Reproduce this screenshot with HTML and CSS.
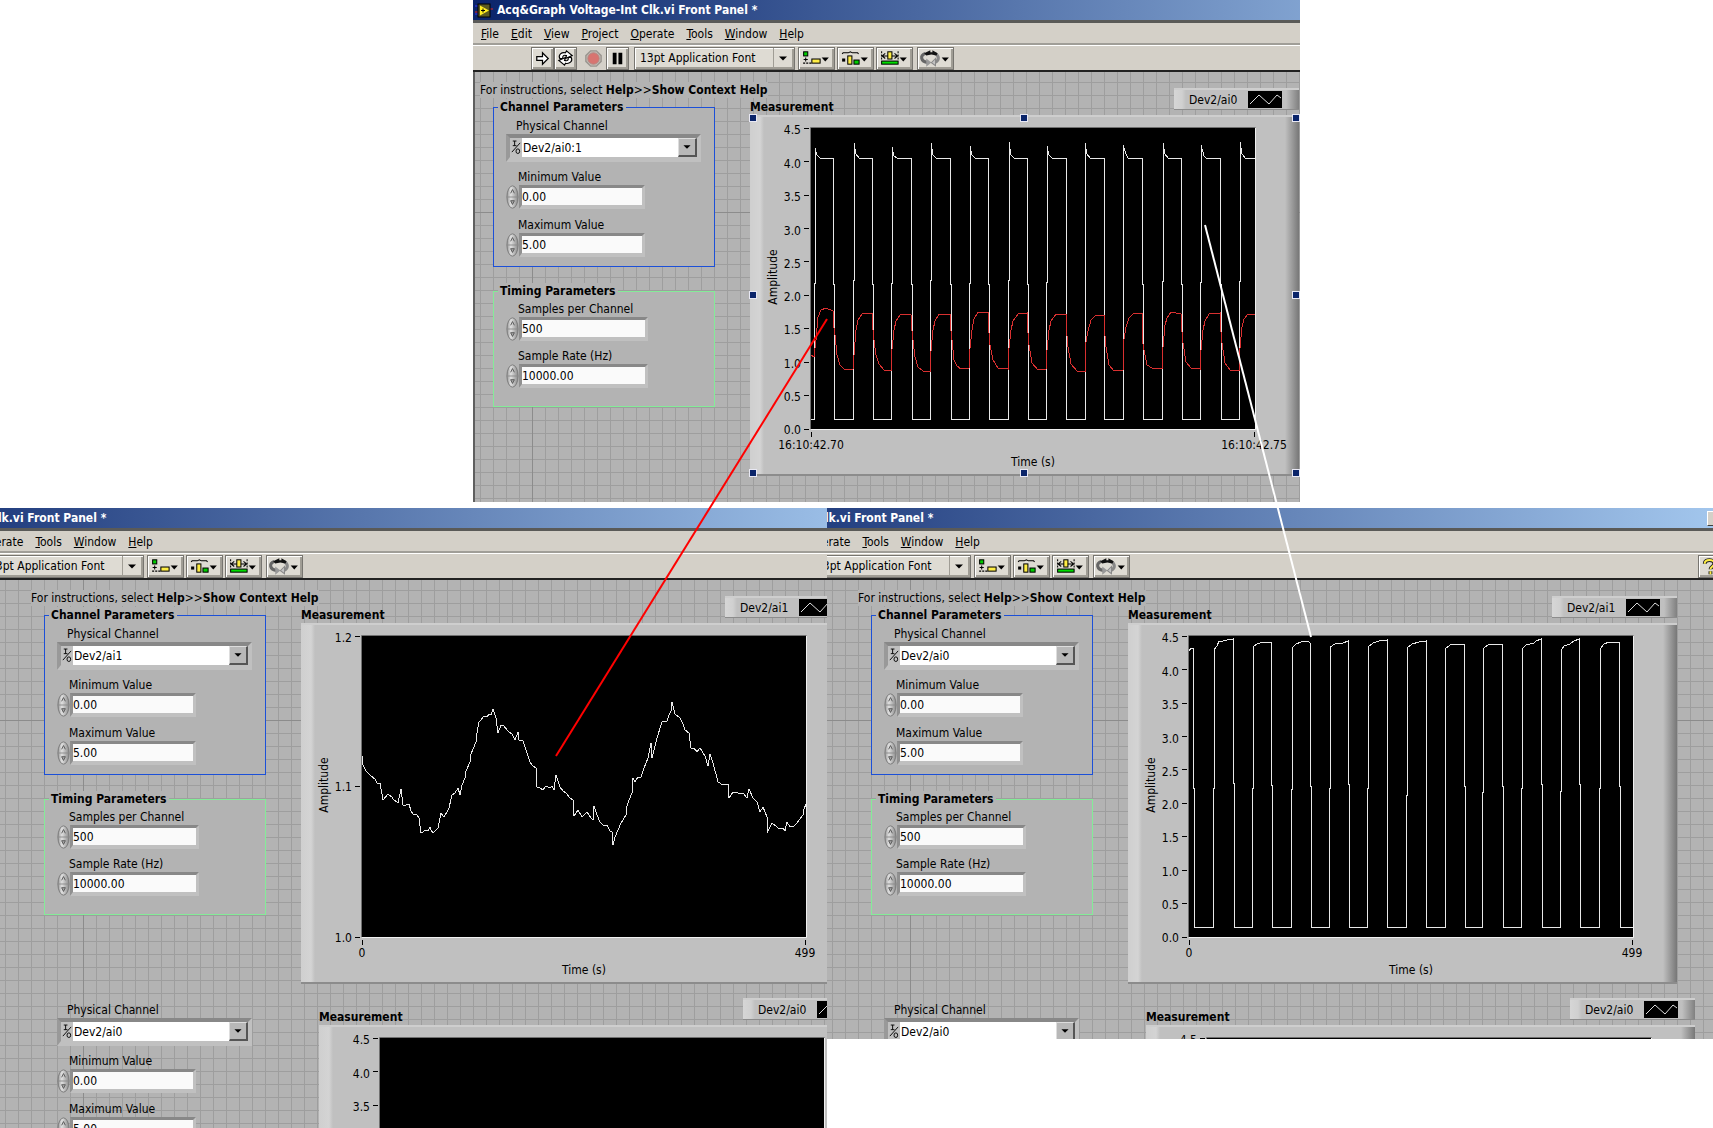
FILE: index.html
```html
<!DOCTYPE html>
<html lang="en">
<head>
<meta charset="utf-8">
<title>Acq&amp;Graph Voltage-Int Clk.vi</title>
<link rel="stylesheet" href="styles.css">
</head>
<body>
<svg class="defs" width="0" height="0" aria-hidden="true">
  <defs>
    <linearGradient id="spin" x1="0" x2="1" y1="0" y2="0">
      <stop offset="0" stop-color="#9a9a9a"/><stop offset=".35" stop-color="#e0e0e0"/><stop offset="1" stop-color="#8a8a8a"/>
    </linearGradient>
    <symbol id="i-app" viewBox="0 0 18 16">
      <path d="M0 4h4M0 12h4" stroke="#33f" stroke-width="1"/><path d="M0 10h4M14 7h4" stroke="#d22" stroke-width="1"/>
      <rect x="3" y="2" width="12" height="13" fill="#5a5a20" stroke="#000"/>
      <path d="M5 3.500v10l9-5z" fill="#ffee22"/><path d="M6 8.500h4M8 6.500v4" stroke="#000" stroke-width="1"/>
    </symbol>
    <symbol id="i-run" viewBox="0 0 22 22"><path d="M5 9h6V5l6 6-6 6v-4H5z" fill="#fff" stroke="#000" stroke-width="1.300"/></symbol>
    <symbol id="i-loop" viewBox="0 0 22 22">
      <path d="M5 11c-2-4 2-7 6-6l1-2 6 5-7 3 1-3c-3-1-4 0-4 3z" fill="#fff" stroke="#000" stroke-width="1.200"/>
      <path d="M17 10c2 4-2 7-6 6l-1 2-6-5 7-3-1 3c3 1 4 0 4-3z" fill="#fff" stroke="#000" stroke-width="1.200"/>
    </symbol>
    <symbol id="i-stop" viewBox="0 0 22 22"><path d="M8 3h6l5 5v6l-5 5H8l-5-5V8z" fill="#c4bcb4" stroke="#9a9690" stroke-width="1.500"/><circle cx="11" cy="11" r="6" fill="#d87470" stroke="#b08884"/></symbol>
    <symbol id="i-pause" viewBox="0 0 22 22"><path d="M6 5h4v12H6zM12 5h4v12h-4z" fill="#000"/></symbol>
    <symbol id="i-align" viewBox="0 0 34 20">
      <rect x="4.500" y="3.500" width="4" height="4" fill="#0c0" stroke="#000"/>
      <path d="M6.500 9v4M4.500 11h4" stroke="#000"/><path d="M4 14.500h8" stroke="#000" stroke-dasharray="2 1"/>
      <rect x="12.500" y="10.500" width="8" height="4" fill="#ffee44" stroke="#000"/><path d="M22 9h7l-3.500 4z"/>
    </symbol>
    <symbol id="i-dist" viewBox="0 0 34 20">
      <path d="M4 5.500l1-1h5l2-1 2 1h5l1 1" fill="none" stroke="#000"/><rect x="4" y="10" width="3" height="3"/>
      <rect x="9.500" y="7.500" width="4" height="8" fill="#ffee44" stroke="#000"/><rect x="15.500" y="11.500" width="5" height="4" fill="#0c0" stroke="#000"/><path d="M22 9h7l-3.500 4z"/>
    </symbol>
    <symbol id="i-size" viewBox="0 0 34 20">
      <path d="M4.500 3v8M20.500 3v8" stroke="#000" stroke-dasharray="2 1"/><path d="M5 7.500h15M8 5l-3 2.500L8 10M17 5l3 2.500L17 10" stroke="#000" fill="none"/>
      <rect x="10.500" y="3.500" width="4" height="7" fill="#ffee44" stroke="#000"/><rect x="4.500" y="12.500" width="16" height="3" fill="#0d0" stroke="#000"/><path d="M22 9h7l-3.500 4z"/>
    </symbol>
    <symbol id="i-order" viewBox="0 0 34 20">
      <path d="M7 5c-5 2-5 8 3 9" fill="none" stroke="#666" stroke-width="3"/><path d="M16 5c5 2 5 7 0 9" fill="none" stroke="#888" stroke-width="3"/>
      <path d="M6 5l6-3v2h2V2l5 3-1 2-5-1-5 1z" fill="#111"/>
      <path d="M8 10l5 4-5 4z" fill="#999"/><path d="M17 10l-4 4 4 3z" fill="#c4c4c4" stroke="#888"/>
      <path d="M23 9h7l-3.500 4z"/>
    </symbol>
    <symbol id="i-help" viewBox="0 0 22 22"><path d="M6 8c0-5 10-5 10 0 0 3-4 3-4 6M12 16v3" fill="none" stroke="#222" stroke-width="4"/><path d="M6 8c0-5 10-5 10 0 0 3-4 3-4 6M12 16v3" fill="none" stroke="#ffee44" stroke-width="2"/></symbol>
    <symbol id="i-down" viewBox="0 0 18 18"><path d="M5 7h8l-4 4z"/></symbol>
    <symbol id="i-io" viewBox="0 0 13 18"><path d="M3 2h4M5 2v5M3 7h4M2 14L11 4" fill="none" stroke="#000" stroke-width="1"/><ellipse cx="8.500" cy="13" rx="2" ry="2.500" fill="none" stroke="#000"/></symbol>
    <symbol id="i-spin" viewBox="0 0 14 26">
      <ellipse cx="7" cy="13" rx="6" ry="12" fill="url(#spin)" stroke="#777"/><path d="M1 13h12" stroke="#8a8a8a"/>
      <path d="M5 9l2-4 2 4" fill="none" stroke="#555"/><path d="M5 17h4l-2 4z" fill="#aaa" stroke="#555"/>
    </symbol>
    <symbol id="i-wave" viewBox="0 0 34 17"><rect width="34" height="17"/><path d="M2 13l9-9 10 9 8-9 4 3" fill="none" stroke="#ddd"/></symbol>
    <symbol id="axis-volts" viewBox="0 0 549 361">
      <rect x="61" y="13" width="444" height="301"/><path d="M61 314.500h444.500V13" fill="none" stroke="#f0f0f0"/><path d="M60.500 314V12.500h445" fill="none" stroke="#707070"/>
      <path d="M54 13.500h5M54 46.500h5M54 80.500h5M54 113.500h5M54 146.500h5M54 180.500h5M54 213.500h5M54 247.500h5M54 280.500h5M54 314.500h5M61.500 317v5M504.500 317v5" stroke="#000"/>
      <g text-anchor="end"><text x="51" y="19">4.5</text><text x="51" y="53">4.0</text><text x="51" y="86">3.5</text><text x="51" y="120">3.0</text><text x="51" y="153">2.5</text><text x="51" y="186">2.0</text><text x="51" y="219">1.5</text><text x="51" y="253">1.0</text><text x="51" y="286">0.5</text><text x="51" y="319">0.0</text></g>
      <text x="283" y="351" text-anchor="middle">Time (s)</text><text transform="translate(27 162) rotate(-90)" text-anchor="middle">Amplitude</text>
    </symbol>
  </defs>
</svg>

<main class="desktop">
  <section class="window window-both">
    <div class="frame">
      <header class="titlebar"><svg width="18" height="16"><use href="#i-app"/></svg><h1>Acq&amp;Graph Voltage-Int Clk.vi Front Panel *</h1><button class="min" aria-label="Minimize"></button></header>
      <nav class="menubar"><button><u>F</u>ile</button><button><u>E</u>dit</button><button><u>V</u>iew</button><button><u>P</u>roject</button><button><u>O</u>perate</button><button><u>T</u>ools</button><button><u>W</u>indow</button><button><u>H</u>elp</button></nav>
      <div class="toolbar">
        <button class="tool" aria-label="Run"><svg><use href="#i-run"/></svg></button><button class="tool" aria-label="Run continuously"><svg><use href="#i-loop"/></svg></button>
        <button class="tool flat" aria-label="Abort"><svg><use href="#i-stop"/></svg></button><button class="tool" aria-label="Pause"><svg><use href="#i-pause"/></svg></button>
        <div class="fontbox"><select aria-label="Text settings"><option>13pt Application Font</option></select><svg><use href="#i-down"/></svg></div>
        <button class="tool wide" aria-label="Align objects"><svg><use href="#i-align"/></svg></button><button class="tool wide" aria-label="Distribute objects"><svg><use href="#i-dist"/></svg></button><button class="tool wide" aria-label="Resize objects"><svg><use href="#i-size"/></svg></button><button class="tool wide order" aria-label="Reorder"><svg><use href="#i-order"/></svg></button>
        <button class="tool help" aria-label="Context help"><svg><use href="#i-help"/></svg></button>
      </div>
      <div class="canvas">
        <div class="controls">
          <p class="hint">For instructions, select <b>Help</b>&gt;&gt;<b>Show Context Help</b></p>
          <fieldset class="group channel"><legend>Channel Parameters</legend>
            <label class="phys" for="a-ch">Physical Channel</label>
            <div class="combo"><svg class="io"><use href="#i-io"/></svg><select id="a-ch"><option>Dev2/ai0:1</option></select><svg class="drop"><use href="#i-down"/></svg></div>
            <label for="a-min">Minimum Value</label><div class="number"><svg><use href="#i-spin"/></svg><input id="a-min" value="0.00"></div>
            <label for="a-max">Maximum Value</label><div class="number"><svg><use href="#i-spin"/></svg><input id="a-max" value="5.00"></div>
          </fieldset>
          <fieldset class="group timing"><legend>Timing Parameters</legend>
            <label for="a-n">Samples per Channel</label><div class="number long"><svg><use href="#i-spin"/></svg><input id="a-n" value="500"></div>
            <label for="a-hz">Sample Rate (Hz)</label><div class="number long"><svg><use href="#i-spin"/></svg><input id="a-hz" value="10000.00"></div>
          </fieldset>
        </div>
        <div class="graphs">
          <figure>
            <figcaption><b>Measurement</b><span class="plate">Dev2/ai0<svg><use href="#i-wave"/></svg></span></figcaption>
            <div class="graph selected">
              <svg class="plot" viewBox="0 0 549 361"><use href="#axis-volts"/>
                <g text-anchor="middle"><text x="61" y="334">16:10:42.70</text><text x="504" y="334">16:10:42.75</text></g>
                <path class="trace" d="M61 304H64V168h1V33l2 7 3 3H83V169h1V304H103V165h1V28l2 11 3 4H122V169h1V304H141V168h1V32l2 9 3 2H161V169h1V304H180V165h1V28l2 12 3 3H200V169h1V304H219V168h1V31l2 9 3 3H238V169h1V304H258V165h1V27l2 13 3 3H277V169h1V304H296V167h1V31l2 9 3 3H316V304H335V28l2 11 3 4H354V304H373V30l3 9 2 4H392V169h1V304H412V166h1V28l2 11 3 4H431V169h1V304H450V167h1V30l3 11 2 2H470V169h1V304H489V166h1V27l2 12 3 4H505"/>
                <path class="trace red" d="M61 240L64 242 66 225 68 202 71 195 76 193 83 196V205L85 220 87 240 90 250 94 254H103L104 240 106 215 108 205 112 199 116 198H122V205L124 225 126 240 129 249 134 255H141V244L144 215 146 206 150 200 154 199 161 200V207L163 225 165 242 168 252 173 256H180V246L183 215 185 206 189 199H200V206L202 225 204 245 207 251 211 254 219 253V243L222 215 224 204 228 197H238V206L240 230 243 245 248 253 258 254V243L261 215 263 206 268 199 277 198V206L279 230 282 248 288 255 296 254V245L299 215 301 206 306 199H316V210L318 232 321 249 327 256H335V232L338 216 341 205 346 200H354V210L356 232 359 250 364 256 373 255V230L376 212 379 203 384 198H392V222L394 235 397 250 402 253H412V243L415 210 417 203 421 197 431 199V206L433 228 436 247 441 253 450 254V245L453 215 455 206 459 199 470 198V206L472 228 475 248 480 255H489V243L492 212 494 204 498 199H505"/>
              </svg>
              <i class="grip tl"></i><i class="grip tc"></i><i class="grip tr"></i><i class="grip ml"></i><i class="grip mr"></i><i class="grip bl"></i><i class="grip bc"></i><i class="grip br"></i>
            </div>
          </figure>
        </div>
      </div>
    </div>
  </section>

  <div class="pair">
    <section class="window window-ai1 scrolled">
      <div class="frame">
        <header class="titlebar"><svg width="18" height="16"><use href="#i-app"/></svg><h1>Acq&amp;Graph Voltage-Int Clk.vi Front Panel *</h1><button class="min" aria-label="Minimize"></button></header>
        <nav class="menubar"><button><u>F</u>ile</button><button><u>E</u>dit</button><button><u>V</u>iew</button><button><u>P</u>roject</button><button><u>O</u>perate</button><button><u>T</u>ools</button><button><u>W</u>indow</button><button><u>H</u>elp</button></nav>
        <div class="toolbar">
          <button class="tool" aria-label="Run"><svg><use href="#i-run"/></svg></button><button class="tool" aria-label="Run continuously"><svg><use href="#i-loop"/></svg></button>
          <button class="tool flat" aria-label="Abort"><svg><use href="#i-stop"/></svg></button><button class="tool" aria-label="Pause"><svg><use href="#i-pause"/></svg></button>
          <div class="fontbox"><select aria-label="Text settings"><option>13pt Application Font</option></select><svg><use href="#i-down"/></svg></div>
          <button class="tool wide" aria-label="Align objects"><svg><use href="#i-align"/></svg></button><button class="tool wide" aria-label="Distribute objects"><svg><use href="#i-dist"/></svg></button><button class="tool wide" aria-label="Resize objects"><svg><use href="#i-size"/></svg></button><button class="tool wide order" aria-label="Reorder"><svg><use href="#i-order"/></svg></button>
          <button class="tool help" aria-label="Context help"><svg><use href="#i-help"/></svg></button>
        </div>
        <div class="canvas">
          <div class="controls">
            <p class="hint">For instructions, select <b>Help</b>&gt;&gt;<b>Show Context Help</b></p>
            <fieldset class="group channel"><legend>Channel Parameters</legend>
              <label class="phys" for="b-ch">Physical Channel</label>
              <div class="combo"><svg class="io"><use href="#i-io"/></svg><select id="b-ch"><option>Dev2/ai1</option></select><svg class="drop"><use href="#i-down"/></svg></div>
              <label for="b-min">Minimum Value</label><div class="number"><svg><use href="#i-spin"/></svg><input id="b-min" value="0.00"></div>
              <label for="b-max">Maximum Value</label><div class="number"><svg><use href="#i-spin"/></svg><input id="b-max" value="5.00"></div>
            </fieldset>
            <fieldset class="group timing"><legend>Timing Parameters</legend>
              <label for="b-n">Samples per Channel</label><div class="number long"><svg><use href="#i-spin"/></svg><input id="b-n" value="500"></div>
              <label for="b-hz">Sample Rate (Hz)</label><div class="number long"><svg><use href="#i-spin"/></svg><input id="b-hz" value="10000.00"></div>
            </fieldset>
            <div class="group loose">
              <label class="phys" for="b-ch2">Physical Channel</label>
              <div class="combo"><svg class="io"><use href="#i-io"/></svg><select id="b-ch2"><option>Dev2/ai0</option></select><svg class="drop"><use href="#i-down"/></svg></div>
              <label for="b-min2">Minimum Value</label><div class="number"><svg><use href="#i-spin"/></svg><input id="b-min2" value="0.00"></div>
              <label for="b-max2">Maximum Value</label><div class="number"><svg><use href="#i-spin"/></svg><input id="b-max2" value="5.00"></div>
            </div>
          </div>
          <div class="graphs">
            <figure>
              <figcaption><b>Measurement</b><span class="plate">Dev2/ai1<svg><use href="#i-wave"/></svg></span></figcaption>
              <div class="graph">
                <svg class="plot" viewBox="0 0 549 361">
                  <rect x="61" y="13" width="444" height="301"/><path d="M61 314.500h444.500V13" fill="none" stroke="#f0f0f0"/><path d="M60.500 314V12.500h445" fill="none" stroke="#707070"/>
                  <path d="M54 13.500h5M54 163.500h5M54 314.500h5M61.500 317v5M504.500 317v5" stroke="#000"/>
                  <g text-anchor="end"><text x="51" y="19">1.2</text><text x="51" y="168">1.1</text><text x="51" y="319">1.0</text></g>
                  <g text-anchor="middle"><text x="61" y="334">0</text><text x="504" y="334">499</text><text x="283" y="351">Time (s)</text><text transform="translate(27 162) rotate(-90)">Amplitude</text></g>
                  <path class="trace" d="M61 133L62 142 65 148 70 153 74 156 76 160 79 160 82 177 87 171 91 174 92 176 97 180 100 166 102 182 105 182 108 181 110 188 112 191 116 192 118 195 120 210 122 209 124 207 127 208 129 204 130 207 132 210 135 207 137 205 140 190 143 194 146 189 148 185 151 172 154 170 157 165 159 172 161 162 164 155 165 148 169 139 170 131 175 119 176 110 178 99 180 97 183 93 186 94 188 91 190 92 192 86 195 95 197 110 200 102 203 103 206 107 208 109 211 111 214 117 217 109 218 117 222 118 225 127 229 139 232 143 235 145 236 164 239 165 242 167 245 163 249 165 251 163 253 167 255 152 259 164 262 168 265 170 269 175 272 177 273 193 277 187 281 194 283 192 286 189 290 195 292 197 293 183 296 192 299 199 303 203 306 202 309 208 311 209 312 222 314 214 317 207 320 200 325 192 326 183 328 177 331 170 332 155 334 159 337 154 340 154 343 145 347 135 350 120 351 135 354 123 356 115 361 99 363 98 366 98 368 92 370 88 371 79 374 91 379 95 382 101 384 107 388 110 390 125 393 125 396 129 399 125 404 133 407 143 409 131 412 140 417 159 422 162 427 161 428 175 432 169 437 170 442 170 446 175 448 166 452 175 456 179 459 189 462 184 466 194 466 210 471 200 476 204 478 206 482 205 484 208 486 199 489 204 493 203 496 200 502 192 503 186 505 181"/>
                </svg>
              </div>
            </figure>
            <figure class="second">
              <figcaption><b>Measurement</b><span class="plate">Dev2/ai0<svg><use href="#i-wave"/></svg></span></figcaption>
              <div class="graph"><svg class="plot" viewBox="0 0 549 361"><use href="#axis-volts"/></svg></div>
            </figure>
          </div>
        </div>
      </div>
    </section>

    <section class="window window-ai0 scrolled">
      <div class="frame">
        <header class="titlebar"><svg width="18" height="16"><use href="#i-app"/></svg><h1>Acq&amp;Graph Voltage-Int Clk.vi Front Panel *</h1><button class="min" aria-label="Minimize"></button></header>
        <nav class="menubar"><button><u>F</u>ile</button><button><u>E</u>dit</button><button><u>V</u>iew</button><button><u>P</u>roject</button><button><u>O</u>perate</button><button><u>T</u>ools</button><button><u>W</u>indow</button><button><u>H</u>elp</button></nav>
        <div class="toolbar">
          <button class="tool" aria-label="Run"><svg><use href="#i-run"/></svg></button><button class="tool" aria-label="Run continuously"><svg><use href="#i-loop"/></svg></button>
          <button class="tool flat" aria-label="Abort"><svg><use href="#i-stop"/></svg></button><button class="tool" aria-label="Pause"><svg><use href="#i-pause"/></svg></button>
          <div class="fontbox"><select aria-label="Text settings"><option>13pt Application Font</option></select><svg><use href="#i-down"/></svg></div>
          <button class="tool wide" aria-label="Align objects"><svg><use href="#i-align"/></svg></button><button class="tool wide" aria-label="Distribute objects"><svg><use href="#i-dist"/></svg></button><button class="tool wide" aria-label="Resize objects"><svg><use href="#i-size"/></svg></button><button class="tool wide order" aria-label="Reorder"><svg><use href="#i-order"/></svg></button>
          <button class="tool help" aria-label="Context help"><svg><use href="#i-help"/></svg></button>
        </div>
        <div class="canvas">
          <div class="controls">
            <p class="hint">For instructions, select <b>Help</b>&gt;&gt;<b>Show Context Help</b></p>
            <fieldset class="group channel"><legend>Channel Parameters</legend>
              <label class="phys" for="c-ch">Physical Channel</label>
              <div class="combo"><svg class="io"><use href="#i-io"/></svg><select id="c-ch"><option>Dev2/ai0</option></select><svg class="drop"><use href="#i-down"/></svg></div>
              <label for="c-min">Minimum Value</label><div class="number"><svg><use href="#i-spin"/></svg><input id="c-min" value="0.00"></div>
              <label for="c-max">Maximum Value</label><div class="number"><svg><use href="#i-spin"/></svg><input id="c-max" value="5.00"></div>
            </fieldset>
            <fieldset class="group timing"><legend>Timing Parameters</legend>
              <label for="c-n">Samples per Channel</label><div class="number long"><svg><use href="#i-spin"/></svg><input id="c-n" value="500"></div>
              <label for="c-hz">Sample Rate (Hz)</label><div class="number long"><svg><use href="#i-spin"/></svg><input id="c-hz" value="10000.00"></div>
            </fieldset>
            <div class="group loose">
              <label class="phys" for="c-ch2">Physical Channel</label>
              <div class="combo"><svg class="io"><use href="#i-io"/></svg><select id="c-ch2"><option>Dev2/ai0</option></select><svg class="drop"><use href="#i-down"/></svg></div>
            </div>
          </div>
          <div class="graphs">
            <figure>
              <figcaption><b>Measurement</b><span class="plate">Dev2/ai1<svg><use href="#i-wave"/></svg></span></figcaption>
              <div class="graph">
                <svg class="plot" viewBox="0 0 549 361"><use href="#axis-volts"/>
                  <g text-anchor="middle"><text x="61" y="334">0</text><text x="504" y="334">499</text></g>
                  <path class="trace" d="M61 28l2-3h2V165h1V304H85V165h1V27l3-4 2-5h4l4-1 6-1V160h1V304H124V165h1V24l4-3 6-2h8V162h1V304H163V166h1V25l4-4 5-2 7-1 2 2V163h1V304H201V165h1V24l5-3 8-1 5-2V161h1V304H239V165h1V24l5-4 6-2 8-1V304H278V172h1V25l5-4 7-2 7-1V304H317V26l5-4 5-1h9V163h1V304H354V169h1V29l1-4 5-4h13V163h1V304H393V165h1V26l4-4 8-2 2-2 5-2V161h1V304H432V168h1V28l3-5 6-2 4-3 5-2V161h1V304H471V165h1V26l4-5 5-2h10V163h1V304H505"/>
                </svg>
              </div>
            </figure>
            <figure class="second">
              <figcaption><b>Measurement</b><span class="plate">Dev2/ai0<svg><use href="#i-wave"/></svg></span></figcaption>
              <div class="graph"><svg class="plot" viewBox="0 0 549 361"><use href="#axis-volts"/></svg></div>
            </figure>
          </div>
        </div>
      </div>
    </section>
  </div>
  <svg class="callouts" aria-hidden="true"><path d="M827 319L556 756" stroke="#f00"/><path d="M1205 225L1311 637" stroke="#fff"/></svg>
</main>
</body>
</html>
```
FILE: styles.css
```css
* { box-sizing: border-box; }
body {
  margin: 0;
  background: #fff;
  color: #000;
  font: 12px/16px "DejaVu Sans Condensed", "DejaVu Sans", sans-serif;
  font-stretch: condensed;
}
svg { display: block; flex: none; }
button, input, select { font: inherit; color: inherit; margin: 0; padding: 0; border: 0; border-radius: 0; }
select { appearance: none; background: none; }
p, figure, h1 { margin: 0; }
.defs { position: absolute; }

.desktop {
  position: relative;
  display: flex;
  flex-direction: column;
  gap: 6px;
  overflow: hidden;
}
.pair { display: grid; grid-template-columns: 827px minmax(0, 1fr); align-items: start; }
.window { overflow: hidden; }
.window-both { width: 827px; height: 502px; margin-left: 473px; }
.window-ai1 { height: 620px; }
.window-ai0 { height: 531px; }
.callouts { position: absolute; inset: 0; width: 100%; height: 100%; stroke-width: 2; pointer-events: none; }

.frame { width: 1090px; background: #d4d0c8; }
.scrolled .frame { margin-left: -178px; }
.titlebar {
  display: flex;
  align-items: center;
  gap: 4px;
  height: 20px;
  padding: 0 15px 0 2px;
  background: linear-gradient(90deg, #0a246a, #a6caf0);
  color: #fff;
}
.titlebar h1 { font-size: 12px; line-height: 16px; font-weight: bold; white-space: nowrap; }
.min { width: 17px; height: 15px; margin-left: auto; background: #d4d0c8; border: 1px solid #fff; border-right-color: #404040; border-bottom-color: #404040; }
.menubar {
  display: flex;
  gap: 12px;
  height: 25px;
  padding: 2px 8px 1px;
  border-top: 3px solid #5a5a58;
  border-bottom: 2px solid #a09e98;
}
.menubar button { background: none; }
.toolbar {
  display: flex;
  align-items: center;
  height: 27px;
  padding: 1px 18px 1px 58px;
  border-top: 1px solid #fff;
  border-bottom: 2px solid #222;
}
.tool, .fontbox {
  height: 23px;
  background: #dedbd3;
  border: 1px solid #777570;
  box-shadow: inset 1px 1px #fff, inset -2px -2px #a09d95;
}
.tool { width: 23px; padding: 0; }
.tool svg { width: 21px; height: 21px; }
.tool.flat { margin: 0 1px 0 5px; border-color: transparent; box-shadow: none; background: none; }
.fontbox { display: flex; width: 161px; margin: 0 3px 0 5px; padding-left: 5px; }
.fontbox select { width: 134px; height: 20px; border-right: 1px solid #a09d95; }
.fontbox svg { width: 18px; height: 21px; }
.tool.wide { width: 37px; margin-right: 2px; }
.tool.wide svg { width: 35px; height: 21px; }
.tool.order { margin-left: 2px; }
.tool.help { margin-left: auto; }

.canvas {
  --axis: 59px;
  display: flex;
  align-items: flex-start;
  min-height: 620px;
  padding-left: 7px;
  background:
    linear-gradient(#8c8c8c, #8c8c8c) var(--axis) 0 / 1px 100% no-repeat,
    linear-gradient(#8c8c8c, #8c8c8c) 0 140px / 100% 1px no-repeat,
    repeating-linear-gradient(90deg, #9e9e9e 0 1px, transparent 1px 13px) calc(var(--axis) - 1300px) 0 / 3900px 100% no-repeat,
    repeating-linear-gradient(#9e9e9e 0 1px, transparent 1px 13px) 0 -120px / 100% 1300px no-repeat,
    #b3b3b3;
}
.window-both .canvas { border-left: 2px solid #606060; padding-left: 5px; --axis: 57px; }
.scrolled .canvas { padding-left: 209px; --axis: 261px; }
.controls { width: 270px; padding-top: 10px; flex: none; }
.hint { width: max-content; margin-bottom: 1px; background: #b3b3b3; white-space: nowrap; }

.group { width: 222px; margin: 0 0 0 13px; padding: 0 0 0 12px; border: 1px solid; background: #b3b3b3; }
.group legend { margin-left: -8px; padding: 0 3px 0 2px; font-weight: bold; background: #b3b3b3; }
.group label { display: block; width: max-content; margin-left: 12px; }
.group .phys { margin-left: 10px; }
.channel { height: 168px; border-color: #1c50d8; }
.channel .phys { margin-top: 3px; }
.timing { height: 124px; margin-top: 16px; border-color: #84ec98; }
.timing legend { margin-bottom: 2px; }
.loose { margin-top: 86px; border-color: transparent; background: none; }

.combo {
  display: flex;
  width: 195px;
  height: 28px;
  margin: 0 0 7px;
  border: solid;
  border-width: 4px 4px 5px;
  border-color: #888 #c0c0c0 #c0c0c0 #999;
  background: #c0c0c0;
}
.combo .io { width: 12px; height: 19px; }
.combo select { flex: 1; padding-left: 1px; background: #fff; height: 19px; }
.combo .drop { width: 19px; height: 19px; background: #b8b8b8; border: 1px solid #ddd; border-right: 2px solid #555; border-bottom: 2px solid #555; }
.number { display: flex; align-items: center; width: 139px; height: 24px; margin-bottom: 8px; }
.number svg { width: 13px; height: 26px; }
.number input {
  flex: 1;
  min-width: 0;
  height: 24px;
  border: solid;
  border-width: 3px 3px 4px 3px;
  border-color: #888 #c0c0c0 #c0c0c0 #909090;
  background: #fafafa;
}
.number.long { width: 142px; margin-bottom: 7px; }

.graphs { width: 549px; flex: none; padding-top: 2px; }
figure { width: 549px; }
.second { margin-left: 18px; }
figcaption { display: flex; justify-content: space-between; align-items: flex-end; height: 41px; }
.plate {
  display: flex;
  align-items: center;
  justify-content: space-between;
  width: 125px;
  height: 22px;
  margin-bottom: 5px;
  padding: 0 17px 0 15px;
  background: linear-gradient(90deg, #d6d6d6, #d0d0d0 8px, #c0c0c0 12px, #c0c0c0 112px, #808080);
  border-top: 2px solid #cecece;
  border-bottom: 1px solid #8c8c8c;
}
.plate svg { width: 34px; height: 17px; }
.graph {
  position: relative;
  height: 361px;
  background: linear-gradient(90deg, #cfcfcf, #d4d4d4 10px, #c0c0c0 14px, #c0c0c0 535px, #777);
  border-top: 2px solid #cecece;
  border-bottom: 2px solid #8c8c8c;
}
.plot { width: 549px; height: 361px; margin-top: -2px; font-size: 12px; }
.trace { fill: none; stroke: #e8e8e8; stroke-width: 1; shape-rendering: crispEdges; }
.trace.red { stroke: #d83030; }
.grip { position: absolute; width: 8px; height: 8px; margin: -6px 0 0 -1px; background: #0a246a; border: 1px solid #e8e8f4; }
.tl, .ml, .bl { left: 0; }
.tc, .bc { left: 271px; }
.tr, .mr, .br { left: 543px; }
.tl, .tc, .tr { top: 3px; }
.ml, .mr { top: 180px; }
.bl, .bc, .br { top: 358px; }
```
